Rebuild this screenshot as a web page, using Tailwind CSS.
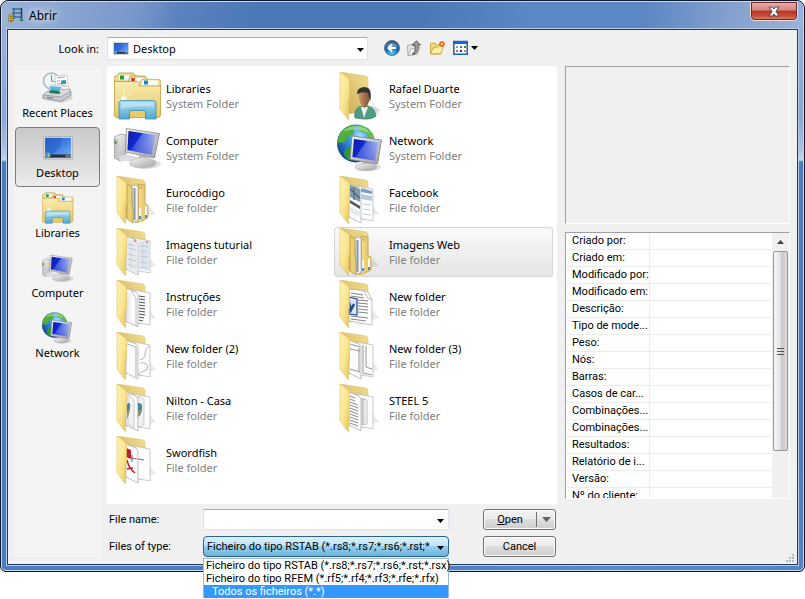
<!DOCTYPE html>
<html lang="pt">
<head>
  <meta charset="UTF-8">
  <meta name="viewport" content="width=device-width, initial-scale=1.0">
  <title>Abrir</title>
  <script src="https://cdn.jsdelivr.net/npm/@tailwindcss/browser@4"></script>
</head>
<body class="min-h-screen bg-white text-black text-[11px] leading-[15px] font-['Noto_Sans','Open_Sans',sans-serif]">

  <!-- Icons -->
  <svg class="absolute size-0" aria-hidden="true">
    <defs>
      <linearGradient id="flap" x1="0" x2="1" y1="0" y2="1"><stop offset="0" stop-color="#fdf3b4"/><stop offset=".5" stop-color="#fbe792"/><stop offset="1" stop-color="#e9c457"/></linearGradient>
      <linearGradient id="back" x1="0" x2="1" y1="1" y2="0"><stop offset="0" stop-color="#c9a850"/><stop offset="1" stop-color="#f2df92"/></linearGradient>
      <linearGradient id="screen" x1="0" x2="1" y1="0" y2=".6"><stop offset="0" stop-color="#0a1a9c"/><stop offset=".42" stop-color="#1230d8"/><stop offset=".46" stop-color="#5a78f0"/><stop offset="1" stop-color="#dfe8ff"/></linearGradient>
      <linearGradient id="screen2" x1="0" x2="0" y1="0" y2="1"><stop offset="0" stop-color="#0a18a0" stop-opacity="0"/><stop offset="1" stop-color="#0a18c8" stop-opacity=".55"/></linearGradient>
      <linearGradient id="metal" x1="0" x2="1" y1="0" y2="1"><stop offset="0" stop-color="#f6f6f6"/><stop offset="1" stop-color="#a0a0a0"/></linearGradient>
      <linearGradient id="lib" x1="0" x2="0" y1="0" y2="1"><stop offset="0" stop-color="#f9ecb0"/><stop offset="1" stop-color="#e8c860"/></linearGradient>
      <linearGradient id="clip" x1="0" x2="0" y1="0" y2="1"><stop offset="0" stop-color="#a9dcee"/><stop offset=".5" stop-color="#7cc4e2"/><stop offset="1" stop-color="#55a6d0"/></linearGradient>
      <linearGradient id="desk" x1="0" x2="1" y1="0" y2="1"><stop offset="0" stop-color="#2d62c8"/><stop offset=".5" stop-color="#3f7ee4"/><stop offset="1" stop-color="#7db1f4"/></linearGradient>
      <radialGradient id="globe" cx=".6" cy=".3" r=".75"><stop offset="0" stop-color="#9fe0ff"/><stop offset=".4" stop-color="#3a94dc"/><stop offset="1" stop-color="#0c3a94"/></radialGradient>
      <radialGradient id="backbtn" cx=".5" cy=".9" r=".9"><stop offset="0" stop-color="#4fd0f4"/><stop offset=".5" stop-color="#1c70b4"/><stop offset="1" stop-color="#3c6080"/></radialGradient>
      <linearGradient id="skin" x1="0" x2="1"><stop offset="0" stop-color="#cf9d70"/><stop offset="1" stop-color="#7c4f30"/></linearGradient>
      <linearGradient id="shade" x1="0" x2="1"><stop offset="0" stop-color="#c4c4c4"/><stop offset="1" stop-color="#ffffff"/></linearGradient>
    </defs>
    <symbol id="i-back" viewBox="0 0 48 48">
      <path d="M13 46L42 38L36 30L30 44Z" fill="#000" opacity=".08"/>
      <path d="M3 0L29 4Q31 4.500 31 7V38L12 42Z" fill="url(#back)" stroke="#dcc173" stroke-width=".6"/>
    </symbol>
    <symbol id="i-flap" viewBox="0 0 48 48">
      <path d="M3 0L11 6Q12.500 7 12.500 9V27L11.500 30V48L3 37Z" fill="url(#flap)" stroke="#e3c56c" stroke-width=".6"/>
    </symbol>
    <symbol id="i-sheets" viewBox="0 0 48 48">
      <use href="#i-back"/>
      <path d="M20 10L36 13V45L20 42Z" fill="#fdfdfd" stroke="#b4b4b4" stroke-width=".7"/>
      <path d="M12 8L22 12L24 15V47L12 41Z" fill="#fbfbfb" stroke="#a8a8a8" stroke-width=".7"/>
    </symbol>
    <symbol id="i-folders" viewBox="0 0 48 48">
      <use href="#i-back"/>
      <path d="M24 8L31 9V28L34 29V42L26 46Z" fill="#e8cd74" stroke="#b8923c" stroke-width=".6"/>
      <path d="M31 31L33 30V39L31 40Z" fill="#fff"/><path d="M31 39h2v3h-2z" fill="#3f8de0"/>
      <path d="M19 10L28 11V46L21 47Z" fill="#d4b155"/>
      <path d="M18 9L24 10V45L19 46Z" fill="#f4f4f4" stroke="#999" stroke-width=".5"/>
      <path d="M20.500 12V44" stroke="#8a97a8" stroke-width="2"/>
      <path d="M25 12L28 13V40L27 46H25Z" fill="#f0d67e"/><path d="M26 32V40" stroke="#fff" stroke-width="1.500"/><path d="M26 40V43" stroke="#3f8de0" stroke-width="2"/>
      <path d="M13 8L18 11V29L19 31V47L13 43Z" fill="#e9cf74" stroke="#a98836" stroke-width=".6"/>
      <use href="#i-flap"/>
    </symbol>
    <symbol id="i-images" viewBox="0 0 48 48">
      <use href="#i-sheets"/>
      <path d="M13 10L23 14V45L13 40Z" fill="#e6ebf0"/><path d="M25 12L35 14V43L25 41Z" fill="#dfe5ee"/>
      <path d="M14 16l7 2M14 20l8 2M14 26l7 2M14 31l8 2M14 36l7 3M26 18l8 1M26 23l7 1M26 28l8 1M26 34l7 1M26 39l8 1" stroke="#b4c0cf" stroke-width=".8"/>
      <path d="M17 14V41M29 14V40" stroke="#c7d0da" stroke-width=".7"/><path d="M20 13h2M32 14h2" stroke="#d33" stroke-width="1"/>
      <use href="#i-flap"/>
    </symbol>
    <symbol id="i-photos" viewBox="0 0 48 48">
      <use href="#i-sheets"/>
      <path d="M13 9L23 13V26L13 21Z" fill="#7f9db5"/><path d="M13 13l10 9M17 11v13" stroke="#53606b" stroke-width="1.200"/><path d="M13 24L23 30V33L13 27Z" fill="#505558"/><path d="M13 31l10 5v5l-10-5z" fill="#e4e9f2"/>
      <path d="M24 12L35 15V18L24 16Z" fill="#7e9dc4"/><path d="M24 18L35 20V25L24 23Z" fill="#b7c9dd"/><path d="M26 28l8 1M26 33l7 1M26 38l8 1" stroke="#bcd0d0" stroke-width="1"/>
      <use href="#i-flap"/>
    </symbol>
    <symbol id="i-text" viewBox="0 0 48 48">
      <use href="#i-sheets"/>
      <path d="M17 11L22 18V46" fill="none" stroke="#c0c0c0" stroke-width="1"/><path d="M12 12L18 15V42L12 39Z" fill="url(#shade)" opacity=".5"/>
      <path d="M25 16l6 1M25 19l6 1M25 22l6 1M25 25l6 1M25 28l6 1M25 31l6 1M25 34l6 1M25 37l5 1M25 40l4 1" stroke="#555" stroke-width="1.200"/>
      <use href="#i-flap"/>
    </symbol>
    <symbol id="i-word" viewBox="0 0 48 48">
      <use href="#i-back"/>
      <path d="M12 9L30 11L35 19V45L12 41Z" fill="#fdfdfd" stroke="#a8a8a8" stroke-width=".7"/><path d="M27 11L31 18L35 20" fill="none" stroke="#aaa" stroke-width=".8"/>
      <path d="M14 13l12 2M14 16l13 2M21 20l10 1M21 23l10 1M21 26l10 1M21 29l10 1M21 32l10 1M14 36l17 2M14 39l15 2" stroke="#777" stroke-width=".9"/>
      <path d="M12 17L20 19V35L12 34Z" fill="#dce6f5" stroke="#1f4b93" stroke-width="1.200"/><path d="M12 22l2 8 3-6" fill="none" stroke="#1f4b93" stroke-width="2.500"/>
      <use href="#i-flap"/>
    </symbol>
    <symbol id="i-shapes" viewBox="0 0 48 48">
      <use href="#i-sheets"/>
      <path d="M13 12L22 15V45M26 28q5-1 5-6t4-8M26 31q6-1 8 3q0 4-4 5q-4 1-6 4" fill="none" stroke="#a0a0a0" stroke-width=".8"/>
      <use href="#i-flap"/>
    </symbol>
    <symbol id="i-frames" viewBox="0 0 48 48">
      <use href="#i-sheets"/>
      <path d="M13 12L23 15M13 17L23 19M13 37L23 40M22 16V40M29 14V35L35 37M26 13V41L35 43" fill="none" stroke="#8d8d8d" stroke-width=".9"/>
      <use href="#i-flap"/>
    </symbol>
    <symbol id="i-casa" viewBox="0 0 48 48">
      <use href="#i-sheets"/>
      <path d="M14 10L20 16V44L14 40ZM24 12L30 15V41L24 43Z" fill="#f1f1f1" stroke="#bbb" stroke-width=".7"/>
      <path d="M13 20q4-3 3 4t-3 11z" fill="#4a8795"/><path d="M24 19q5-1 4 6q0 5-4 8z" fill="#4a8795"/><path d="M13 28l3-3-3 9zM24 28l4-3-4 7z" fill="#b99054"/>
      <use href="#i-flap"/>
    </symbol>
    <symbol id="i-pdf" viewBox="0 0 48 48">
      <use href="#i-sheets"/>
      <path d="M12 12L17 14V23L12 21Z" fill="#b3222a"/><path d="M13 24q2 9 8 13M13 33q3-1 6-1" fill="none" stroke="#b3222a" stroke-width="1.400"/>
      <path d="M17 22l6 1M24 23l6 1M18 19v7" stroke="#777" stroke-width="1.200"/>
      <use href="#i-flap"/>
    </symbol>
    <symbol id="i-steel" viewBox="0 0 48 48">
      <use href="#i-sheets"/>
      <path d="M13 12l5 2M13 15l5 2M13 18l8 3M13 21l8 3M13 24l8 3M13 27l8 3M13 30l8 3M13 33l8 3M13 36l8 3M13 39l8 3" stroke="#8a8a8a" stroke-width="1"/>
      <path d="M25 14L30 16V40L25 41Z" fill="url(#shade)" stroke="#aaa" stroke-width=".7"/>
      <use href="#i-flap"/>
    </symbol>
    <symbol id="i-user" viewBox="0 0 48 48">
      <path d="M34 34L44 38L38 46Z" fill="#000" opacity=".1"/>
      <use href="#i-back"/><use href="#i-flap"/>
      <path d="M18 46Q16 35 26 34Q37 32 39 44Q34 49 18 46Z" fill="#4f9c82" stroke="#2f7560" stroke-width=".6"/>
      <path d="M24 35L27 46L31 35Z" fill="#eef3f2"/>
      <path d="M21 22Q21 16 27 16Q33 17 33 23Q33 31 28 36Q23 35 21 22Z" fill="url(#skin)"/>
      <path d="M20 22Q20 15 28 15Q36 16 33 30Q32 24 31 21Q26 19 20 22Z" fill="#333336"/>
    </symbol>
    <symbol id="i-libraries" viewBox="0 0 48 48">
      <path d="M0 9V5Q0 4 3 4L5 1H19L22 4L28 5V12Z" fill="#efdc94" stroke="#b8973f" stroke-width=".8"/>
      <path d="M5 3.500h14l1 4H5z" fill="#fff"/><path d="M6 3.500h4v4H6z" fill="#1fa04a"/>
      <path d="M14 10L16 4H31L34 8L42 9V14H14Z" fill="#efdc94" stroke="#b8973f" stroke-width=".8"/>
      <path d="M16 6h14l2 4H16z" fill="#fff"/><path d="M17 6h4v3.500h-4z" fill="#e0421d"/>
      <path d="M0.500 9.500H23Q25 9.500 26 11L27 13H46.500V43Q46 45.500 44 45.500H3Q.5 45.500 .5 43Z" fill="url(#lib)" stroke="#c09c3e" stroke-width=".8"/>
      <path d="M25 12L28 7L46 7.500L47 12V14H25Z" fill="#efdc94" stroke="#b8973f" stroke-width=".6"/>
      <path d="M28 8.500h16v4.500H28z" fill="#fff"/><path d="M30 8.500h4V12.500h-4z" fill="#1e84d6"/>
      <path d="M10 17V38M1 28H19M4 21L16 34M17 20L4 35" stroke="#fff" stroke-width=".8" opacity=".8"/><circle cx="10" cy="27" r="2.500" fill="#fff" opacity=".8"/>
      <path d="M5 31Q5 28.500 8 28.500H39Q42 28.500 42 31V47H31.500V40Q31.500 38.500 30 38.500H17Q15.500 38.500 15.500 40V47H5Z" fill="url(#clip)" stroke="#3b8db8" stroke-width=".8"/>
      <path d="M7 30.500H40V35Q22 33 7 37Z" fill="#fff" opacity=".35"/>
    </symbol>
    <symbol id="i-monitor" viewBox="0 0 48 48">
      <ellipse cx="31" cy="40" rx="16" ry="5" fill="#000" opacity=".12"/>
      <path d="M25 31L34 33V38L24 37Z" fill="#c4c4c4"/>
      <ellipse cx="29" cy="39" rx="13" ry="5" fill="url(#metal)" stroke="#b9b9b9" stroke-width=".6"/>
      <path d="M12.500 4.500L45.500 9.500L40.500 34L11.500 28Z" fill="url(#metal)" stroke="#8d8d8d" stroke-width=".8"/>
      <path d="M14.500 7L41.500 11L37.500 31L13.500 26Z" fill="url(#screen)"/><path d="M14.500 7L41.500 11L37.500 31L13.500 26Z" fill="url(#screen2)"/>
    </symbol>
    <symbol id="i-computer" viewBox="0 0 48 48">
      <path d="M.5 13L7 10L12 11V33L19 35L6 37L.5 34Z" fill="url(#metal)" stroke="#8f8f8f" stroke-width=".7"/>
      <path d="M1 14L4.500 15V35L1 33Z" fill="#c8c8c8"/><path d="M1.500 17v3" stroke="#31a818" stroke-width="2"/>
      <path d="M5 33L12 30L26 34L18 37L6 37Z" fill="#dcdcdc"/>
      <use href="#i-monitor"/>
    </symbol>
    <symbol id="i-network" viewBox="0 0 48 48">
      <circle cx="19" cy="19.500" r="19" fill="url(#globe)"/>
      <path d="M3 9Q8 2 15 1L21 2L16 6L17 10L11 13L7 19L3 18L0 20Q1 13 3 9Z" fill="#4fae3c"/><path d="M23 1L31 4L36 10L38 17L32 14L29 9L24 8L20 4Z" fill="#63bb4a"/><path d="M8 25L14 23L17 27L14 33L12 37L7 31Z" fill="#2f9a34"/>
      <path d="M5 8Q12 1 21 2Q30 4 33 9Q20 3 5 8Z" fill="#fff" opacity=".35"/>
      <ellipse cx="31" cy="43" rx="13" ry="4" fill="#000" opacity=".12"/><path d="M25 37L34 39V43L25 42Z" fill="#bbb"/>
      <ellipse cx="29" cy="43" rx="11" ry="3.800" fill="url(#metal)" stroke="#b0b0b0" stroke-width=".6"/>
      <path d="M15 12L44.500 16L40.500 40L13 35.500Z" fill="url(#metal)" stroke="#7f7f7f" stroke-width=".8"/>
      <path d="M17 15L41.500 18.500L38 37L15.500 33Z" fill="url(#screen)"/><path d="M17 15L41.500 18.500L38 37L15.500 33Z" fill="url(#screen2)"/>
    </symbol>
    <symbol id="i-desktop" viewBox="0 0 32 26">
      <path d="M.5 .5H31.500V25H.5Z" fill="#dfe3ea" stroke="#a8adb8"/>
      <path d="M2 2H30V23H2Z" fill="url(#desk)"/><path d="M2 2H20Q22 12 9 20H2Z" fill="#1d4fb8" opacity=".35"/>
      <path d="M2 20H30V23.500H2Z" fill="#27303e"/><path d="M24 20h6v3.500h-6z" fill="#6d7787"/>
      <circle cx="5" cy="20.500" r="3" fill="#3f9fe0"/><path d="M3.500 19h1.500v1.500H3.500z" fill="#e85a2b"/><path d="M5.500 19H7v1.500H5.500z" fill="#8bd244"/><path d="M5.500 21H7v1.500H5.500z" fill="#f8d040"/>
    </symbol>
    <symbol id="i-recent" viewBox="0 0 32 32">
      <path d="M4 28L28 20L31 27L20 31Z" fill="#000" opacity=".12"/>
      <circle cx="9.500" cy="9" r="8" fill="#edf3f6" stroke="#a9b7bf" stroke-width="1.500"/><path d="M9.500 3V9L14 10" fill="none" stroke="#7890a0" stroke-width="1"/>
      <path d="M13 4L25 3L27 20L14 19Z" fill="#fff" stroke="#c5c5c5" stroke-width=".8"/><path d="M15 6l8-1M15 9h3M15 12h4M20 14h5M15 15h3" stroke="#a4a4a4" stroke-width="1"/><path d="M19 8.500l5-.5v4l-5 .5z" fill="#3c97b8"/>
      <path d="M1 23L7 18L28 17L29 23L20 29L1 26Z" fill="#d8dadc" stroke="#999" stroke-width=".7"/>
      <path d="M8 13L20 14L18 23L6 22Z" fill="#fff" stroke="#b9b9b9" stroke-width=".6"/><path d="M8.500 14L19 15L17.500 22L7 21Z" fill="#5bb4dd"/><path d="M7.500 19Q13 17 18 20L17.500 22L7 21Z" fill="#27784f"/>
      <path d="M1 23L19 25L29 19V23L19 29.500L1 26.500Z" fill="#c6c9cb" stroke="#8f8f8f" stroke-width=".7"/><path d="M5 25.500l6 .7" stroke="#777" stroke-width="1.200"/>
    </symbol>
    <symbol id="i-arrow" viewBox="0 0 7 4"><path d="M0 0H7L3.500 4Z" fill="currentColor"/></symbol>
  </svg>

  <main class="relative border border-[#10182c] rounded-t-lg rounded-b-md bg-[#4d7cbd]">
    <div class="rounded-t-[7px] rounded-b-[5px] border border-[#c4d8ef] px-1 pb-1 bg-[linear-gradient(90deg,#4d7cbd_0%,#4d7cbd_48%,#5d89c6_75%,#5682c1_100%)]">

      <!-- Title bar; the light glare runs down both side borders -->
      <header class="-mx-1 flex h-[26px] items-start justify-between rounded-t-md pl-1.5 pr-[5px] bg-[linear-gradient(100deg,#9db3d8_0%,#8aa6d0_8%,#7797c9_17%,#5b83bf_22%,#4b78b6_32%,#4b78b6_52%,#5b87c4_66%,#5b87c4_80%,#86a1cb_91%,#9ab3da_100%)]">
        <div class="flex h-full items-center gap-[5px]">
          <svg class="size-4" viewBox="0 0 16 16" aria-hidden="true">
            <path d="M4 2H13M4 6H13M5 10H13M6 1V12" stroke="#3a6f96" stroke-width="1.500"/><path d="M13.500 1V13" stroke="#223f58" stroke-width="1.500"/><path d="M11 14l2.500-2 2.500 2z" fill="#16843c"/>
            <path d="M1 8.500Q3 6 5 8.500V14Q3 16 .5 14Z" fill="#e8c32c" stroke="#7a6410" stroke-width=".8"/><path d="M2 9.500H4M2 11.500H4M2 13.500H4" stroke="#5b4a08" stroke-width=".8"/>
          </svg>
          <h1 class="text-[12px] [text-shadow:0_0_8px_#fff,0_0_12px_#fff]">Abrir</h1>
        </div>
        <button type="button" aria-label="Close" class="flex h-[19px] w-[48px] items-center justify-center rounded-b-[5px] border border-t-0 border-[#f0d8d8] bg-[linear-gradient(#eab0ac_0%,#d68880_45%,#b83422_50%,#c64a34_75%,#dc8a70_100%)] shadow-[inset_0_0_0_1px_#6b2a2a]">
          <svg class="h-[11px] w-3" viewBox="0 0 12 11" aria-hidden="true"><path d="M1 1H4.500L6 3L7.500 1H11L8 5.500L11 10H7.500L6 8L4.500 10H1L4 5.500Z" fill="#fff" stroke="#4a4458" stroke-width="1"/></svg>
        </button>
      </header>

      <div class="-mx-1 bg-[linear-gradient(#97b0d8_0px,#8aa7d3_90px,#a9c0e0_120px,#c4d4ea_132px,#4d7cbd_134px,#4d7cbd_80%,transparent_100%)] px-1">
        <div class="border border-[#b9cde8]">
          <form class="relative border border-[#1f3a60] bg-[#f0f0f0]">

            <!-- Look in -->
            <div class="flex h-9 items-center">
              <label for="look-in" class="w-[99px] pr-2 text-right">Look in:</label>
              <div class="relative w-[261px]">
                <select id="look-in" class="block h-[23px] w-full appearance-none border border-[#e2e3ea] border-t-[#abadb3] bg-white pl-[25px] pr-5">
                  <option>Desktop</option>
                </select>
                <svg class="pointer-events-none absolute left-1.5 top-[5px] h-[13px] w-4" aria-hidden="true"><use href="#i-desktop"/></svg>
                <svg class="pointer-events-none absolute right-1 top-[11px] h-1 w-[7px]" aria-hidden="true"><use href="#i-arrow"/></svg>
              </div>
              <div class="ml-4 flex items-center gap-[7px]">
                <button type="button" aria-label="Back">
                  <svg class="size-4" viewBox="0 0 16 16"><circle cx="8" cy="8" r="7.500" fill="url(#backbtn)" stroke="#3d5f7c" stroke-width=".8"/><path d="M2 6Q8 0 14 6Q8 8 2 6Z" fill="#fff" opacity=".3"/><path d="M12 8H5M8 4.500L4.500 8L8 11.500" fill="none" stroke="#fff" stroke-width="1.900"/></svg>
                </button>
                <button type="button" aria-label="Up one level">
                  <svg class="size-4" viewBox="0 0 16 16"><path d="M.5 5.500L5 4.500L6 6L10 5.500L10.500 14L1 15.500Z" fill="#e4e4e4" stroke="#999" stroke-width=".8"/><path d="M1 15.500L4 9L13 7L10.500 14Z" fill="#f6f6f6" stroke="#a5a5a5" stroke-width=".8"/><path d="M5 14Q9 12 8 5H5L9.500 .8L13.500 5H11Q12 12 7 14.500Z" fill="#a0a0a0" stroke="#444" stroke-width=".8"/></svg>
                </button>
                <button type="button" aria-label="Create new folder">
                  <svg class="size-4" viewBox="0 0 16 16"><path d="M.5 4Q.5 3 1.500 3H5L6.500 5H11V14H.5Z" fill="#f4d878" stroke="#c49a34" stroke-width=".8"/><path d="M.5 14L3 8L7 7.500L8.500 6H13.500L11 13.500Z" fill="#fdf0a8" stroke="#c49a34" stroke-width=".8"/><path d="M12 1V7M9 4H15M10 2L14 6M14 2L10 6" stroke="#ee4a1c" stroke-width="1.300"/><circle cx="12" cy="4" r="1.500" fill="#ffd24a"/></svg>
                </button>
                <button type="button" aria-label="Views" class="flex items-center gap-0.5">
                  <svg class="size-4" viewBox="0 0 16 16"><path d="M.8 1.500H14.200V14.200H.8Z" fill="#fff" stroke="#1462c0" stroke-width="1.500"/><path d="M0 1H15V4H0Z" fill="#1668cc"/><path d="M3 6h2v2H3z" fill="#9a9a9a"/><path d="M7 6h2v2H7z" fill="#2e78d8"/><path d="M11 6h2v2h-2z" fill="#2d9a3c"/><path d="M3 10h2v2H3z" fill="#e06030"/><path d="M7 10h2v2H7z" fill="#1b2f88"/><path d="M11 10h2v2h-2z" fill="#c09a28"/></svg>
                  <svg class="h-1 w-[7px]"><use href="#i-arrow"/></svg>
                </button>
              </div>
            </div>

            <div class="flex pb-[7px] pl-1.5 pr-[7px]">
              <!-- Places bar -->
              <nav aria-label="Places" class="w-[87px] shrink-0 bg-[#f4f4f4] px-px pt-px">
                <button type="button" class="flex h-[60px] w-full flex-col items-center pt-[5px]">
                  <svg class="size-8" aria-hidden="true"><use href="#i-recent"/></svg>
                  <span class="whitespace-nowrap pt-px">Recent Places</span>
                </button>
                <button type="button" class="flex h-[60px] w-full flex-col items-center rounded-sm border border-[#7c7c7c] bg-linear-to-b from-[#c9c9c9] via-[#dadada] to-[#ececec] pt-2" aria-pressed="true">
                  <svg class="h-6 w-[30px]" aria-hidden="true"><use href="#i-desktop"/></svg>
                  <span class="pt-[5px]">Desktop</span>
                </button>
                <button type="button" class="flex h-[60px] w-full flex-col items-center pt-[5px]">
                  <svg class="size-8" aria-hidden="true"><use href="#i-libraries"/></svg>
                  <span class="pt-px">Libraries</span>
                </button>
                <button type="button" class="flex h-[60px] w-full flex-col items-center pt-[5px]">
                  <svg class="size-8" aria-hidden="true"><use href="#i-computer"/></svg>
                  <span class="pt-px">Computer</span>
                </button>
                <button type="button" class="flex h-[60px] w-full flex-col items-center pt-[5px]">
                  <svg class="size-8" aria-hidden="true"><use href="#i-network"/></svg>
                  <span class="pt-px">Network</span>
                </button>
              </nav>

              <div class="ml-1.5 min-w-0 flex-1">
                <!-- Folder contents -->
                <ul class="grid h-[438px] grid-cols-2 content-start gap-x-1 gap-y-0.5 bg-white px-1 pt-[5px]">
                  <li class="flex h-[50px] items-center gap-1 pl-[3px]">
                    <svg class="size-12" aria-hidden="true"><use href="#i-libraries"/></svg>
                    <div><p>Libraries</p><p class="text-[#808080]">System Folder</p></div>
                  </li>
                  <li class="flex h-[50px] items-center gap-1 pl-[3px]">
                    <svg class="size-12" aria-hidden="true"><use href="#i-user"/></svg>
                    <div><p>Rafael Duarte</p><p class="text-[#808080]">System Folder</p></div>
                  </li>
                  <li class="flex h-[50px] items-center gap-1 pl-[3px]">
                    <svg class="size-12" aria-hidden="true"><use href="#i-computer"/></svg>
                    <div><p>Computer</p><p class="text-[#808080]">System Folder</p></div>
                  </li>
                  <li class="flex h-[50px] items-center gap-1 pl-[3px]">
                    <svg class="size-12" aria-hidden="true"><use href="#i-network"/></svg>
                    <div><p>Network</p><p class="text-[#808080]">System Folder</p></div>
                  </li>
                  <li class="flex h-[50px] items-center gap-1 pl-[3px]">
                    <svg class="size-12" aria-hidden="true"><use href="#i-folders"/></svg>
                    <div><p>Eurocódigo</p><p class="text-[#808080]">File folder</p></div>
                  </li>
                  <li class="flex h-[50px] items-center gap-1 pl-[3px]">
                    <svg class="size-12" aria-hidden="true"><use href="#i-photos"/></svg>
                    <div><p>Facebook</p><p class="text-[#808080]">File folder</p></div>
                  </li>
                  <li class="flex h-[50px] items-center gap-1 pl-[3px]">
                    <svg class="size-12" aria-hidden="true"><use href="#i-images"/></svg>
                    <div><p>Imagens tuturial</p><p class="text-[#808080]">File folder</p></div>
                  </li>
                  <li class="flex h-[50px] items-center gap-1 rounded-[3px] border border-[#d5d5d5] bg-linear-to-b from-[#fafafa] to-[#e5e5e5] pl-0.5">
                    <svg class="size-12" aria-hidden="true"><use href="#i-folders"/></svg>
                    <div><p>Imagens Web</p><p class="text-[#808080]">File folder</p></div>
                  </li>
                  <li class="flex h-[50px] items-center gap-1 pl-[3px]">
                    <svg class="size-12" aria-hidden="true"><use href="#i-text"/></svg>
                    <div><p>Instruções</p><p class="text-[#808080]">File folder</p></div>
                  </li>
                  <li class="flex h-[50px] items-center gap-1 pl-[3px]">
                    <svg class="size-12" aria-hidden="true"><use href="#i-word"/></svg>
                    <div><p>New folder</p><p class="text-[#808080]">File folder</p></div>
                  </li>
                  <li class="flex h-[50px] items-center gap-1 pl-[3px]">
                    <svg class="size-12" aria-hidden="true"><use href="#i-shapes"/></svg>
                    <div><p>New folder (2)</p><p class="text-[#808080]">File folder</p></div>
                  </li>
                  <li class="flex h-[50px] items-center gap-1 pl-[3px]">
                    <svg class="size-12" aria-hidden="true"><use href="#i-frames"/></svg>
                    <div><p>New folder (3)</p><p class="text-[#808080]">File folder</p></div>
                  </li>
                  <li class="flex h-[50px] items-center gap-1 pl-[3px]">
                    <svg class="size-12" aria-hidden="true"><use href="#i-casa"/></svg>
                    <div><p>Nilton - Casa</p><p class="text-[#808080]">File folder</p></div>
                  </li>
                  <li class="flex h-[50px] items-center gap-1 pl-[3px]">
                    <svg class="size-12" aria-hidden="true"><use href="#i-steel"/></svg>
                    <div><p>STEEL 5</p><p class="text-[#808080]">File folder</p></div>
                  </li>
                  <li class="flex h-[50px] items-center gap-1 pl-[3px]">
                    <svg class="size-12" aria-hidden="true"><use href="#i-pdf"/></svg>
                    <div><p>Swordfish</p><p class="text-[#808080]">File folder</p></div>
                  </li>
                </ul>

                <!-- File name and type -->
                <div class="grid grid-cols-[94px_1fr_73px] items-center gap-y-1.5 pl-0.5 pr-px pt-[5px] font-[Roboto,'Liberation_Sans',sans-serif]">
                  <label for="file-name">File name:</label>
                  <div class="relative mr-[34px]">
                    <input id="file-name" type="text" class="block h-[21px] w-full border border-[#e2e3ea] border-t-[#abadb3] bg-white px-1">
                    <svg class="pointer-events-none absolute right-[5px] top-[10px] h-1 w-[7px]" aria-hidden="true"><use href="#i-arrow"/></svg>
                  </div>
                  <div class="flex h-[21px] rounded-[3px] border border-[#707070] bg-[linear-gradient(#f2f2f2_0%,#ebebeb_50%,#dddddd_50%,#cfcfcf_100%)] shadow-[inset_0_0_0_1px_#fcfcfc]">
                    <button type="submit" class="flex-1"><span class="underline">O</span>pen</button>
                    <button type="button" aria-label="Open options" class="my-0.5 flex w-[19px] items-center justify-center border-l border-[#707070] text-[#606060]">
                      <svg class="h-[5px] w-[9px]"><use href="#i-arrow"/></svg>
                    </button>
                  </div>

                  <label for="file-type">Files of type:</label>
                  <div class="relative mr-[34px]">
                    <select id="file-type" class="block h-[21px] w-full appearance-none rounded-sm border border-[#2c628b] bg-[linear-gradient(#d9f0fb_0%,#bde3f7_50%,#98d1ef_50%,#6bb4dc_100%)] pl-[3px] pr-[18px]">
                      <option>Ficheiro do tipo RSTAB (*.rs8;*.rs7;*.rs6;*.rst;*.rsx)</option>
                      <option>Ficheiro do tipo RFEM (*.rf5;*.rf4;*.rf3;*.rfe;*.rfx)</option>
                      <option>Todos os ficheiros (*.*)</option>
                    </select>
                    <svg class="pointer-events-none absolute right-[5px] top-[10px] h-1 w-[7px]" aria-hidden="true"><use href="#i-arrow"/></svg>
                    <ul role="listbox" aria-label="Files of type" class="absolute inset-x-0 top-full z-10 mt-px border border-b-0 border-[#9cb8d4] bg-white leading-[13px] whitespace-nowrap">
                      <li role="option" class="px-0.5">Ficheiro do tipo RSTAB (*.rs8;*.rs7;*.rs6;*.rst;*.rsx)</li>
                      <li role="option" class="px-0.5">Ficheiro do tipo RFEM (*.rf5;*.rf4;*.rf3;*.rfe;*.rfx)</li>
                      <li role="option" aria-selected="true" class="bg-[#3399ff] px-2 text-white">Todos os ficheiros (*.*)</li>
                    </ul>
                  </div>
                  <button type="button" class="h-[21px] rounded-[3px] border border-[#707070] bg-[linear-gradient(#f2f2f2_0%,#ebebeb_50%,#dddddd_50%,#cfcfcf_100%)] shadow-[inset_0_0_0_1px_#fcfcfc]">Cancel</button>
                </div>
              </div>

              <!-- Preview and file properties -->
              <aside class="ml-2 flex w-[225px] shrink-0 flex-col gap-2 font-[Roboto,'Liberation_Sans',sans-serif]">
                <div class="h-[158px] border border-[#a0a0a0] border-r-white border-b-white"></div>
                <div class="flex h-[267px] overflow-hidden border border-[#a0a0a0] border-r-white border-b-white bg-white">
                  <div class="flex-1 overflow-hidden">
                    <table class="w-full table-fixed border-collapse leading-4">
                      <tbody>
                        <tr class="border-b border-[#ececec]"><th scope="row" class="w-[83px] border-r border-[#ececec] pl-1.5 text-left font-normal whitespace-nowrap">Criado por:</th><td></td></tr>
                        <tr class="border-b border-[#ececec]"><th scope="row" class="border-r border-[#ececec] pl-1.5 text-left font-normal whitespace-nowrap">Criado em:</th><td></td></tr>
                        <tr class="border-b border-[#ececec]"><th scope="row" class="border-r border-[#ececec] pl-1.5 text-left font-normal whitespace-nowrap">Modificado por:</th><td></td></tr>
                        <tr class="border-b border-[#ececec]"><th scope="row" class="border-r border-[#ececec] pl-1.5 text-left font-normal whitespace-nowrap">Modificado em:</th><td></td></tr>
                        <tr class="border-b border-[#ececec]"><th scope="row" class="border-r border-[#ececec] pl-1.5 text-left font-normal whitespace-nowrap">Descrição:</th><td></td></tr>
                        <tr class="border-b border-[#ececec]"><th scope="row" class="border-r border-[#ececec] pl-1.5 text-left font-normal whitespace-nowrap">Tipo de mode...</th><td></td></tr>
                        <tr class="border-b border-[#ececec]"><th scope="row" class="border-r border-[#ececec] pl-1.5 text-left font-normal whitespace-nowrap">Peso:</th><td></td></tr>
                        <tr class="border-b border-[#ececec]"><th scope="row" class="border-r border-[#ececec] pl-1.5 text-left font-normal whitespace-nowrap">Nós:</th><td></td></tr>
                        <tr class="border-b border-[#ececec]"><th scope="row" class="border-r border-[#ececec] pl-1.5 text-left font-normal whitespace-nowrap">Barras:</th><td></td></tr>
                        <tr class="border-b border-[#ececec]"><th scope="row" class="border-r border-[#ececec] pl-1.5 text-left font-normal whitespace-nowrap">Casos de car...</th><td></td></tr>
                        <tr class="border-b border-[#ececec]"><th scope="row" class="border-r border-[#ececec] pl-1.5 text-left font-normal whitespace-nowrap">Combinações...</th><td></td></tr>
                        <tr class="border-b border-[#ececec]"><th scope="row" class="border-r border-[#ececec] pl-1.5 text-left font-normal whitespace-nowrap">Combinações...</th><td></td></tr>
                        <tr class="border-b border-[#ececec]"><th scope="row" class="border-r border-[#ececec] pl-1.5 text-left font-normal whitespace-nowrap">Resultados:</th><td></td></tr>
                        <tr class="border-b border-[#ececec]"><th scope="row" class="border-r border-[#ececec] pl-1.5 text-left font-normal whitespace-nowrap">Relatório de i...</th><td></td></tr>
                        <tr class="border-b border-[#ececec]"><th scope="row" class="border-r border-[#ececec] pl-1.5 text-left font-normal whitespace-nowrap">Versão:</th><td></td></tr>
                        <tr><th scope="row" class="border-r border-[#ececec] pl-1.5 text-left font-normal whitespace-nowrap">Nº do cliente:</th><td></td></tr>
                      </tbody>
                    </table>
                  </div>
                  <div class="flex w-[17px] flex-col bg-[#f0f0f0] px-px">
                    <button type="button" aria-label="Scroll up" class="flex h-[18px] items-center justify-center">
                      <svg class="h-1 w-[7px] rotate-180 text-[#404040]"><use href="#i-arrow"/></svg>
                    </button>
                    <div class="flex h-[200px] items-center justify-center rounded-[2px] border border-[#979797] bg-[linear-gradient(90deg,#f5f5f5_0%,#e6e6e8_45%,#c8c8cc_60%,#dcdcde_100%)]">
                      <svg class="h-[9px] w-[7px]" viewBox="0 0 7 9" aria-hidden="true"><path d="M0 1.500H7M0 4.500H7M0 7.500H7" stroke="#555" stroke-width="1"/></svg>
                    </div>
                  </div>
                </div>
              </aside>
            </div>

            <!-- Resize grip -->
            <svg class="absolute right-[3px] bottom-0.5 size-2 text-[#b8b8b8]" viewBox="0 0 8 8" aria-hidden="true"><path d="M6 0h2v2H6zM3 3h2v2H3zM6 3h2v2H6zM0 6h2v2H0zM3 6h2v2H3zM6 6h2v2H6z" fill="currentColor"/></svg>
          </form>
        </div>
      </div>
    </div>
  </main>
</body>
</html>
